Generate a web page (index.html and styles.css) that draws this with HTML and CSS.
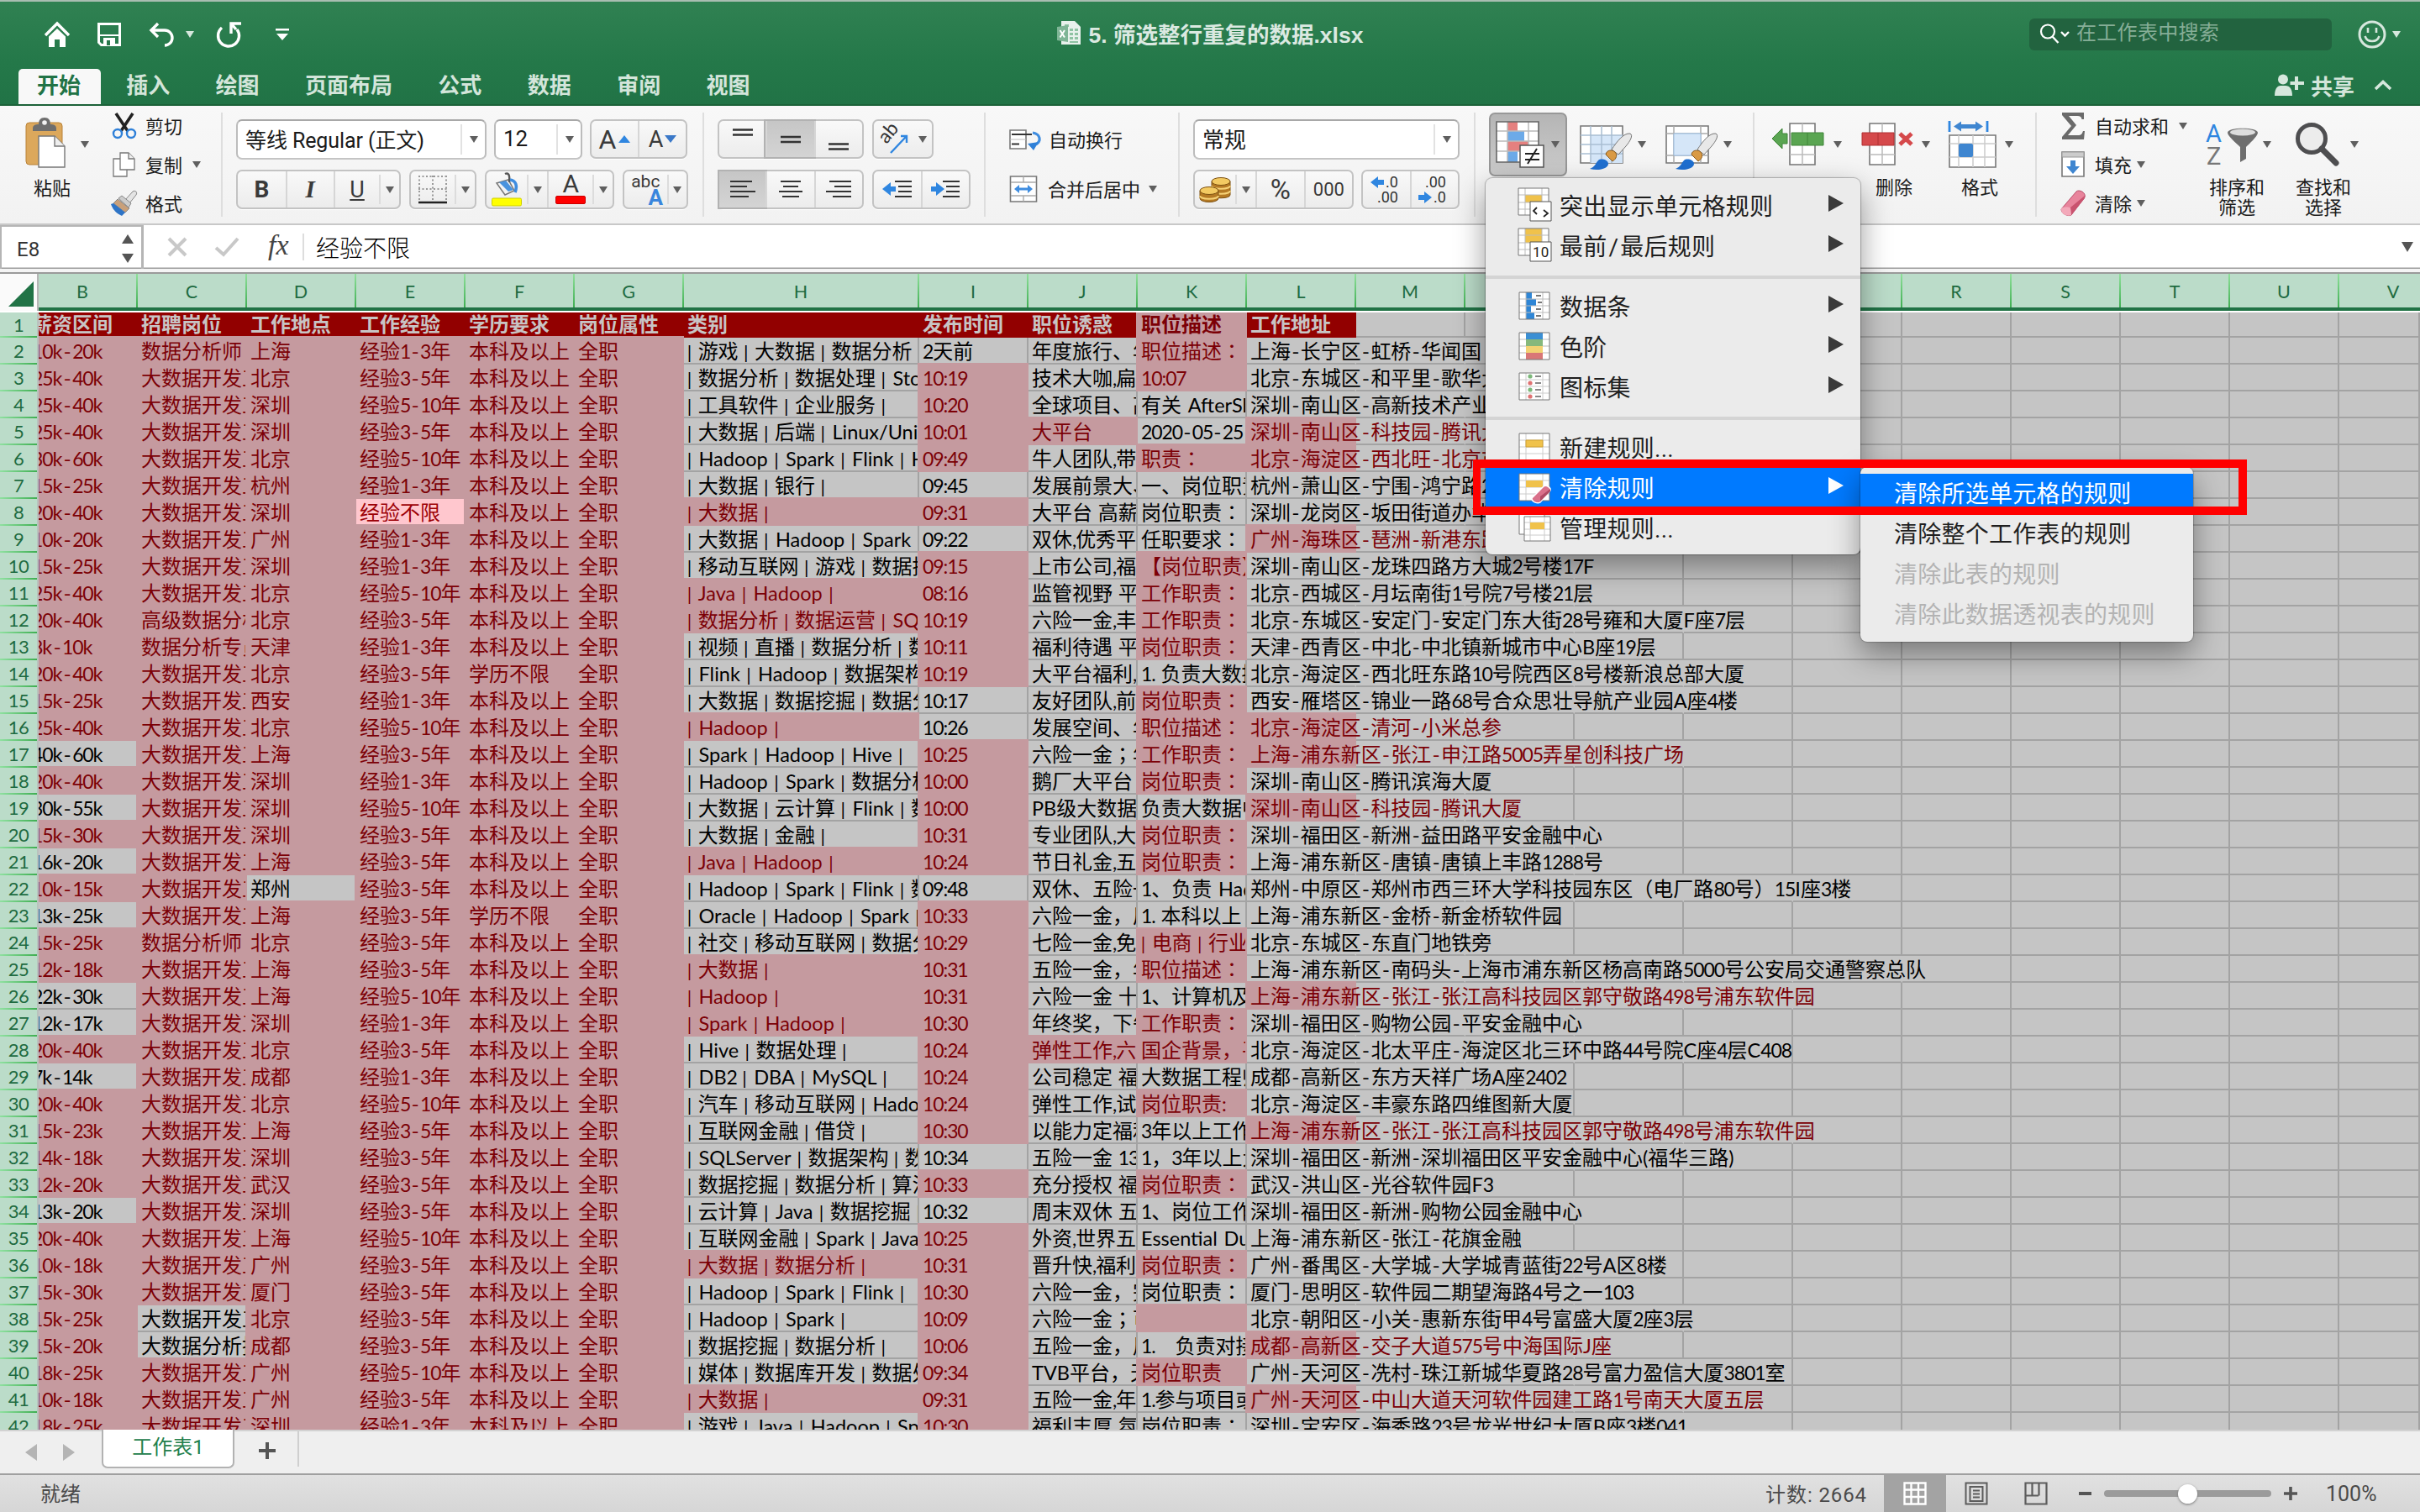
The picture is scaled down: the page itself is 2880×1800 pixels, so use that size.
FILE: index.html
```html
<!DOCTYPE html>
<html lang="zh-CN">
<head>
<meta charset="utf-8">
<title>5. 筛选整行重复的数据.xlsx</title>
<link rel="stylesheet" href="styles.css">
</head>
<body>
<header class="titlebar">
  <div class="title-row">
    <div class="quick">
      <svg class="q-home" width="32" height="32" viewBox="0 0 32 32"><path d="M2 17 16 3l14 14" fill="none" stroke="#fff" stroke-width="3.4"/><path d="M6 18.500 16 9l10 9.500V31h-7v-9h-6v9H6z" fill="#fff"/></svg>
      <svg class="q-save" width="28" height="28" viewBox="0 0 28 28"><path d="M1.500 1.500h25v25h-22l-3-3z" fill="none" stroke="#fff" stroke-width="3"/><path d="M3 14h22v2H3z M7 18h14v9H7z" fill="#fff"/><path d="M11 21h4v6h-4z" fill="#28784b"/></svg>
      <svg class="q-undo" width="32" height="30" viewBox="0 0 32 30"><path d="M11 2 3 10l8 8M4 10h15a9 9 0 0 1 0 18" fill="none" stroke="#fff" stroke-width="3.400"/></svg>
      <i class="caret pale"></i>
      <svg class="q-redo" width="32" height="32" viewBox="0 0 32 32"><path d="M7 8a12.500 12.500 0 1 0 18 2" fill="none" stroke="#fff" stroke-width="3.400"/><path d="M30 3H18v12M18.500 3.500 24 10" fill="none" stroke="#fff" stroke-width="3.400"/></svg>
      <svg class="q-more" width="16" height="14" viewBox="0 0 16 14"><path d="M0 0h16v2.500H0zM1 6h14l-7 8z" fill="#fff"/></svg>
    </div>
    <div class="doc-title">
      <svg width="28" height="28" viewBox="0 0 28 28"><path d="M5 0h16l7 7v21H5z" fill="#e8f1ec"/><path d="M9 4h5v3H9zM15 9h4v3h-4zM21 9h4v3h-4zM15 14h4v3h-4zM21 14h4v3h-4zM15 19h4v3h-4zM21 19h4v3h-4zM15 24h10v2H15z" fill="#8fc3a3"/><path d="M0 7 13 5v20L0 23z" fill="#7fb596"/><path d="M3.500 11 9 19.500M9 11l-5.500 8.500" stroke="#fff" stroke-width="2"/></svg>
      <span>5. 筛选整行重复的数据.xlsx</span>
    </div>
    <div class="title-right">
      <div class="search">
        <svg width="38" height="26" viewBox="0 0 38 26"><circle cx="10" cy="9.500" r="8" fill="none" stroke="#fff" stroke-width="2.200"/><path d="m15.500 15.500 7 7.500M26 10l4.500 4.500L35 10" fill="none" stroke="#fff" stroke-width="2.400"/></svg>
        <span>在工作表中搜索</span>
      </div>
      <svg class="smile" width="34" height="34" viewBox="0 0 34 34"><circle cx="17" cy="17" r="15" fill="none" stroke="#d6e7dd" stroke-width="3"/><path d="M12 9v6M22 9v6M8.500 19a9 9 0 0 0 17 0" fill="none" stroke="#d6e7dd" stroke-width="2.600"/></svg>
      <i class="caret pale"></i>
    </div>
  </div>
  <nav class="tabs">
    <span class="tab on">开始</span><span class="tab">插入</span><span class="tab">绘图</span><span class="tab">页面布局</span><span class="tab">公式</span><span class="tab">数据</span><span class="tab">审阅</span><span class="tab">视图</span>
    <div class="share">
      <svg width="36" height="26" viewBox="0 0 36 26"><circle cx="10" cy="6.500" r="6" fill="#d6e7dd"/><path d="M0 26c0-8 3-12 7-12h6c5 0 8 4 8 12z" fill="#d6e7dd"/><path d="M26 3v16M18.500 11H35" stroke="#d6e7dd" stroke-width="4"/></svg>
      <span>共享</span>
      <svg class="chev" width="22" height="14" viewBox="0 0 22 14"><path d="m2 12 9-8.500 9 8.500" fill="none" stroke="#d6e7dd" stroke-width="3.600"/></svg>
    </div>
  </nav>
</header>

<section class="ribbon">
  <div class="group clip">
    <div class="paste">
      <div class="with-caret">
        <svg width="50" height="62" viewBox="0 0 50 62"><rect x="1" y="7" width="43" height="50" rx="4" fill="#dca85c" stroke="#b98238"/><path d="M9 14c0-4 3-5 7-5 0-5 2-8 7-8s7 3 7 8c4 0 7 1 7 5v3H9z" fill="#6e6e6e"/><circle cx="23" cy="7" r="2.800" fill="#f2f2f2"/><path d="M16 23h19l12 12v25H16z" fill="#fff" stroke="#777" stroke-width="1.400"/><path d="M35 23v12h12" fill="#eee" stroke="#777" stroke-width="1.400"/></svg>
        <i class="caret"></i>
      </div>
      <span class="lab">粘贴</span>
    </div>
    <div class="clip-list">
      <div class="line"><svg width="32" height="32" viewBox="0 0 32 32"><path d="M6 1 20 22M26 1 12 22" stroke="#222" stroke-width="3.600"/><circle cx="8" cy="25" r="5" fill="none" stroke="#2f80d8" stroke-width="2.400"/><circle cx="24" cy="25" r="5" fill="none" stroke="#2f80d8" stroke-width="2.400"/></svg><span>剪切</span></div>
      <div class="line"><svg width="32" height="32" viewBox="0 0 32 32"><path d="M3 9h10l6 6v15H3z" fill="#fff" stroke="#777" stroke-width="1.300"/><path d="M11 2h10l7 7v13H11z" fill="#fff" stroke="#777" stroke-width="1.300"/><path d="M21 2v7h7" fill="#eee" stroke="#777" stroke-width="1.300"/></svg><span>复制</span><i class="caret"></i></div>
      <div class="line"><svg width="32" height="32" viewBox="0 0 32 32"><path d="m17 12 9-10c3-2 6 1 4 4l-8 10z" fill="#e4e4e4" stroke="#888"/><path d="m8 11 14 11-5 5L3 16z" fill="#c9a07a" stroke="#888"/><path d="m3 16 14 11-4 4C6 28 2 23 0 17z" fill="#2e74c6"/><path d="m9 10 4-3 11 9-3 5z" fill="#ccc" stroke="#888"/></svg><span>格式</span></div>
    </div>
  </div>

  <div class="group font">
    <div class="brow">
      <div class="combo w-font"><span>等线 Regular (正文)</span><b></b><i class="caret"></i></div>
      <div class="combo w-size"><span>12</span><b></b><i class="caret"></i></div>
      <div class="btns w-aa"><div class="bt f1 big">A<svg width="14" height="9" viewBox="0 0 14 9"><path d="m0 9 7-9 7 9z" fill="#2f86e0"/></svg></div><div class="bt f1 sep mid">A<svg width="14" height="9" viewBox="0 0 14 9"><path d="M0 0h14L7 9z" fill="#3a78c8"/></svg></div></div>
    </div>
    <div class="brow r2">
      <div class="btns w-biu"><div class="bt w58"><strong>B</strong></div><div class="bt w58 sep"><em>I</em></div><div class="bt w56 sep"><u>U</u></div><div class="bt w24 ssep"><i class="caret"></i></div></div>
      <div class="btns w-bord"><div class="bt w53"><svg width="36" height="36" viewBox="0 0 36 36"><path d="M1 2h34M1 17h34M2 1v30M18 1v30M34 1v30" stroke="#999" stroke-width="2" stroke-dasharray="2 2.500"/><path d="M1 33h34" stroke="#222" stroke-width="2.600"/></svg></div><div class="bt w24 ssep"><i class="caret"></i></div></div>
      <div class="btns w-fill">
        <div class="bt w50"><svg width="40" height="42" viewBox="0 0 40 42"><path d="m8 13 14-4 7 13-11 5z" fill="#f4f4f4" stroke="#777" stroke-width="1.500"/><path d="m11 12 11 11 6-2-9-11z" fill="#4a93de"/><path d="M18 2c4-2 6 1 5 10" fill="none" stroke="#555" stroke-width="2.400"/><path d="M24 9c7 1 9 7 6 15" fill="none" stroke="#3f8de0" stroke-width="3.600"/><rect x="2.500" y="31" width="35" height="9" rx="1.500" fill="#ff0" stroke="#cfcf00"/></svg></div><div class="bt w24 ssep"><i class="caret"></i></div>
        <div class="bt w54 sep stack"><span>A</span><svg width="36" height="10"><rect x=".5" y=".5" width="35" height="9" rx="1.500" fill="#f00" stroke="#c00"/></svg></div><div class="bt w24 ssep"><i class="caret"></i></div>
      </div>
      <div class="btns w-abc"><div class="bt w53 abc"><span>abc</span><b>A</b></div><div class="bt w24 ssep"><i class="caret"></i></div></div>
    </div>
  </div>

  <div class="group align">
    <div class="brow">
      <div class="btns w-al">
        <div class="bt f1"><svg width="28" height="40" viewBox="0 0 28 40"><path d="M2 8.500h24M2 14.500h24" stroke="#333" stroke-width="2.400"/></svg></div>
        <div class="bt f1 sep press"><svg width="28" height="40" viewBox="0 0 28 40"><path d="M2 17h24M2 23h24" stroke="#333" stroke-width="2.400"/></svg></div>
        <div class="bt f1 sep"><svg width="28" height="40" viewBox="0 0 28 40"><path d="M2 25.500h24M2 31.500h24" stroke="#333" stroke-width="2.400"/></svg></div>
      </div>
      <div class="btns w-ab"><div class="bt w48"><svg width="36" height="34" viewBox="0 0 36 34"><text x="0" y="0" transform="translate(9 23) rotate(-50)" font-family="Lato" font-size="23" fill="#333">ab</text><path d="m14 33 18-19M26 13h7v8" fill="none" stroke="#2f86e0" stroke-width="2.400"/></svg></div><div class="bt w20"><i class="caret"></i></div></div>
    </div>
    <div class="brow r2">
      <div class="btns w-al">
        <div class="bt f1 press"><svg width="32" height="24" viewBox="0 0 32 24"><path d="M1 2h26M1 8h20M1 14h30M1 20h22" stroke="#333" stroke-width="2.200"/></svg></div>
        <div class="bt f1 sep"><svg width="32" height="24" viewBox="0 0 32 24"><path d="M4 2h24M7 8h18M2 14h28M6 20h20" stroke="#333" stroke-width="2.200"/></svg></div>
        <div class="bt f1 sep"><svg width="32" height="24" viewBox="0 0 32 24"><path d="M5 2h26M11 8h20M1 14h30M9 20h22" stroke="#333" stroke-width="2.200"/></svg></div>
      </div>
      <div class="btns w-ind">
        <div class="bt f1"><svg width="36" height="24" viewBox="0 0 36 24"><path d="M15 2h20M19 8h16M19 14h16M15 20h20" stroke="#333" stroke-width="2.200"/><path d="m0 11 10-8v5h6v6h-6v5z" fill="#2f86e0"/></svg></div>
        <div class="bt f1 sep"><svg width="36" height="24" viewBox="0 0 36 24"><path d="M15 2h20M19 8h16M19 14h16M15 20h20" stroke="#333" stroke-width="2.200"/><path d="M17 11 7 3v5H1v6h6v5z" fill="#2f86e0"/></svg></div>
      </div>
    </div>
  </div>

  <div class="group wrap">
    <div class="line"><svg width="40" height="28" viewBox="0 0 40 28"><path d="M2 3h19v22H2z" fill="#fff" stroke="#777" stroke-width="1.600"/><path d="M2 14h19" stroke="#bbb"/><path d="M4 8h24M4 19.500h9" stroke="#333" stroke-width="2.200"/><path d="M29 6c10 2 10 10 4 14" fill="none" stroke="#3f8de0" stroke-width="3.200"/><path d="m23 19 13-2-6 10z" fill="#2f80d8"/></svg><span>自动换行</span></div>
    <div class="line l2"><svg width="34" height="34" viewBox="0 0 34 34"><path d="M1.500 2h31v30h-31z" fill="#fff" stroke="#777" stroke-width="1.600"/><path d="M2 9h30M2 25h30M17 2v7M17 25v7" stroke="#aaa" stroke-width="1.400"/><path d="m6 17 6-5v3.500h10V12l6 5-6 5v-3.500H12V22z" fill="#3f8de0"/></svg><span>合并后居中</span><i class="caret"></i></div>
  </div>

  <div class="group num">
    <div class="brow"><div class="combo w-num"><span>常规</span><b></b><i class="caret"></i></div></div>
    <div class="brow r2">
      <div class="btns w-cur">
        <div class="bt w50"><svg width="38" height="32" viewBox="0 0 38 32"><g stroke="#7d5010" stroke-width="1"><path d="M15 6v16c0 5 22 5 22 0V6z" fill="#b57a24"/><path d="M15 11c0 5 22 5 22 0M15 17c0 5 22 5 22 0" fill="none" stroke="#f6d277" stroke-width="2"/><ellipse cx="26" cy="6" rx="11" ry="4.500" fill="#f3ca62"/><path d="M1 17v9c0 6 22 6 22 0v-9z" fill="#b57a24"/><path d="M1 23c0 5 22 5 22 0" fill="none" stroke="#f6d277" stroke-width="2"/><ellipse cx="12" cy="17" rx="11" ry="4.500" fill="#f3ca62"/></g></svg></div>
        <div class="bt w24 ssep"><i class="caret"></i></div><div class="bt w58 sep pct">%</div><div class="bt w58 sep zeros">000</div>
      </div>
      <div class="btns w-dec">
        <div class="bt f1"><svg width="40" height="36" viewBox="0 0 40 36"><path d="m1 9 9-7v4h7v6h-7v4z" fill="#2f86e0"/><text x="19" y="15" class="dt">.0</text><text x="9" y="33" class="dt">.00</text></svg></div>
        <div class="bt f1 sep"><svg width="40" height="36" viewBox="0 0 40 36"><text x="9" y="15" class="dt">.00</text><text x="19" y="33" class="dt">.0</text><path d="m17 27-9-7v4H1v6h7v4z" fill="#2f86e0"/></svg></div>
      </div>
    </div>
  </div>

  <div class="group styles">
    <div class="cf-btn"><svg width="60" height="56" viewBox="0 0 60 56"><path d="M1 1h50v48H1z" fill="#fff"/><path d="M14 1h12v11H14z" fill="#e5807f"/><path d="M14 12h20v12H14z" fill="#6caae8"/><path d="M14 24h25v12H14z" fill="#e5807f"/><path d="M14 36h12v13H14z" fill="#6caae8"/><path d="M1 12h50M1 24h50M1 36h50M14 1v48M39 1v48" stroke="#bbb" stroke-width="1.500"/><path d="M1 1h50v48H1z" fill="none" stroke="#666" stroke-width="1.600"/><path d="M29 29h28v26H29z" fill="#fff" stroke="#555" stroke-width="1.500"/><path d="M35 39h17M35 46h17M49 33 38 51" stroke="#222" stroke-width="2"/></svg><i class="caret"></i></div>
    <svg class="i-table" width="66" height="56" viewBox="0 0 66 56"><path d="M1 2h50v44H1z" fill="#fff" stroke="#777" stroke-width="1.600"/><path d="M13 13h38v33H13z" fill="#d5e6f8"/><path d="M1 13h50M1 24h50M1 35h50M13 2v44M26 2v44M38 2v44" stroke="#a9bed2" stroke-width="1.500"/><path d="M60 11c4 2 0 9-5 15l-9 10-8-6c6-9 14-20 22-19z" fill="#e8e8e8" stroke="#777"/><path d="M31 36c1-6 8-6 11-3s2 8-3 11z" fill="#d99a45" stroke="#8a5a1c"/><path d="M12 53c6-2 7-7 10-10s12-1 12 4-10 9-22 6z" fill="#1f6fd0"/></svg>
    <i class="caret"></i>
    <svg class="i-cell" width="66" height="56" viewBox="0 0 66 56"><path d="M1 2h50v44H1z" fill="#fff" stroke="#777" stroke-width="1.600"/><path d="M1 11h50M1 37h50M10 2v44M42 2v44" stroke="#aaa" stroke-width="1.500"/><path d="M10 11h32v26H10z" fill="#d5e6f8" stroke="#9cbfe4"/><path d="M60 11c4 2 0 9-5 15l-9 10-8-6c6-9 14-20 22-19z" fill="#e8e8e8" stroke="#777"/><path d="M31 36c1-6 8-6 11-3s2 8-3 11z" fill="#d99a45" stroke="#8a5a1c"/><path d="M12 53c6-2 7-7 10-10s12-1 12 4-10 9-22 6z" fill="#1f6fd0"/></svg>
    <i class="caret"></i>
  </div>

  <div class="group cells">
    <div class="tool t-ins"><div class="with-caret"><svg width="64" height="52" viewBox="0 0 64 52"><path d="M22 1h30v49H22z" fill="#fff" stroke="#777" stroke-width="1.600"/><path d="M37 1v49M22 38h30" stroke="#bbb" stroke-width="1.500"/><path d="M24 12h38v15H24z" fill="#5aa552" stroke="#3f8538"/><path d="M43 12v15" stroke="#3f8538"/><path d="m1 19 12-12v6h6v12h-6v6z" fill="#5aa552" stroke="#3f8538"/></svg><i class="caret"></i></div></div>
    <div class="tool t-del"><div class="with-caret"><svg width="64" height="52" viewBox="0 0 64 52"><path d="M10 1h30v49H10z" fill="#fff" stroke="#777" stroke-width="1.600"/><path d="M25 1v49M10 38h30" stroke="#bbb" stroke-width="1.500"/><path d="M1 12h38v15H1z" fill="#d5494b" stroke="#b03032"/><path d="M20 12v15" stroke="#b03032"/><path d="m46 13 14 13M60 13 46 26" stroke="#d5494b" stroke-width="5"/></svg><i class="caret"></i></div><span class="lab">删除</span></div>
    <div class="tool t-fmt"><div class="with-caret"><svg width="60" height="58" viewBox="0 0 60 58"><path d="M2 1v13M47 1v13" stroke="#2f86e0" stroke-width="2.800"/><path d="m7 7.500 9-6V5h17V1.500l9 6-9 6V10H16v3.500z" fill="#3f86d0"/><path d="M2 18h55v38H2z" fill="#fff" stroke="#777" stroke-width="1.600"/><path d="M2 28h55M2 44h55M13 18v38M30 18v38M44 18v38" stroke="#ccc" stroke-width="1.500"/><rect x="13" y="28" width="17" height="16" rx="2" fill="#3f86d0"/></svg><i class="caret"></i></div><span class="lab">格式</span></div>
  </div>

  <div class="group edit">
    <div class="edit-list">
      <div class="line"><svg width="34" height="34" viewBox="0 0 34 34"><path d="M4 1h26v8h-2.500c-.500-3-2-4-5-4H12l9 11-10 12h12c4 0 5-2 6-5h2l-1 10H4v-3l11-13L4 4z" fill="#6a6a6a"/></svg><span>自动求和</span><i class="caret"></i></div>
      <div class="line"><svg width="34" height="32" viewBox="0 0 34 32"><path d="M4 1h26v29H4z" fill="#fff" stroke="#777" stroke-width="1.600"/><path d="M4 1h26v6H4z" fill="#ccc" stroke="#999"/><path d="M14 11h6v7h5l-8 9-8-9h5z" fill="#3f86d0"/></svg><span>填充</span><i class="caret near"></i></div>
      <div class="line"><svg width="34" height="34" viewBox="0 0 34 34"><path d="M3 24 21 3c3-3 12 1 10 7L15 31c-3 2-12-1-12-7z" fill="#e8849c" stroke="#b9506c"/><path d="m15 31-1-9L31 8v3z" fill="#c9536f"/><path d="M3 24c0-3 10-3 11-1l1 8c-3 2-12 0-12-7z" fill="#f3a9ba"/></svg><span>清除</span><i class="caret near"></i></div>
    </div>
    <div class="tool t-sort"><div class="with-caret"><svg width="64" height="52" viewBox="0 0 64 52"><text x="0" y="23" font-family="Roboto" font-size="29" fill="#2f86e0">A</text><text x="1" y="50" font-family="Roboto" font-size="29" fill="#777">Z</text><path d="M26 12c0-7 36-7 36 0 0 4-11 14-14 17v14l-7 4V29c-4-4-15-13-15-17z" fill="#6e6e6e"/><ellipse cx="44" cy="11.500" rx="15" ry="4" fill="#ddd"/></svg><i class="caret"></i></div><span class="lab">排序和<br>筛选</span></div>
    <div class="tool t-find"><div class="with-caret"><svg width="54" height="54" viewBox="0 0 54 54"><circle cx="20" cy="20" r="16.500" fill="#ececec" stroke="#4e4e50" stroke-width="5"/><path d="m32 32 17 17" stroke="#4e4e50" stroke-width="7" stroke-linecap="round"/></svg><i class="caret"></i></div><span class="lab">查找和<br>选择</span></div>
  </div>
</section>

<section class="formula">
  <div class="name-box"><span>E8</span><svg width="16" height="34" viewBox="0 0 16 34"><path d="M1 11 8 0l7 11zM1 23h14L8 34z" fill="#555"/></svg></div>
  <svg class="fx-x" width="24" height="24" viewBox="0 0 24 24"><path d="m2 2 20 20M22 2 2 22" stroke="#c8c8c8" stroke-width="4"/></svg>
  <svg class="fx-v" width="30" height="24" viewBox="0 0 30 24"><path d="m2 13 9 8L28 2" fill="none" stroke="#c8c8c8" stroke-width="4"/></svg>
  <span class="fx">fx</span>
  <span class="fx-text">经验不限</span>
  <i class="caret wide"></i>
</section>

<main class="sheet" id="sheet"></main>

<footer class="sheetbar">
  <svg class="nav-arrows" width="62" height="22" viewBox="0 0 62 22"><path d="M15 1v20L1 11zM46 1v20l14-10z" fill="#b4b4b4"/></svg>
  <span class="sheet-tab">工作表1</span>
  <span class="add"><svg width="20" height="20"><path d="M10 0v20M0 10h20" stroke="#555" stroke-width="4"/></svg></span>
</footer>
<footer class="status">
  <span class="ready">就绪</span>
  <span class="count">计数: 2664</span>
  <span class="view on"><svg width="28" height="28" viewBox="0 0 28 28"><path d="M1.500 1.500h25v25h-25zM1.500 9.500h25M1.500 18h25M9.500 1.500v25M18 1.500v25" fill="none" stroke="#fff" stroke-width="2.400"/></svg></span>
  <span class="view"><svg width="28" height="28" viewBox="0 0 28 28"><path d="M1.500 1.500h25v25h-25zM6.500 6h15v17h-15zM10 10.500h8M10 14.500h8M10 18.500h8" fill="none" stroke="#5c5c5c" stroke-width="2"/></svg></span>
  <span class="view"><svg width="28" height="28" viewBox="0 0 28 28"><path d="M1.500 1.500h25v25h-25zM1.500 16.500h15.500M9.500 2v14M17.500 2v14.500" fill="none" stroke="#5c5c5c" stroke-width="2.200"/></svg></span>
  <span class="minus"></span>
  <span class="slider"><b></b></span>
  <svg class="plus" width="16" height="16"><path d="M8 0v16M0 8h16" stroke="#555" stroke-width="3.600"/></svg>
  <span class="zoom">100%</span>
</footer>

<div class="menu">
  <div class="mi"><svg width="42" height="42" viewBox="0 0 42 42"><path d="M1 1h36v32H1z" fill="#fff"/><path d="M9 9h20v9H9z" fill="#f0c24b"/><path d="M1 9h36M1 18h36M1 26h36M9 1v32M29 1v32" stroke="#bbb"/><path d="M1 1h36v32H1z" fill="none" stroke="#777"/><path d="M15 17h25v23H15z" fill="#fff" stroke="#555"/><path d="m23 24-4 4 4 4M31 27l5 4-5 4" fill="none" stroke="#222" stroke-width="1.800"/></svg><span>突出显示单元格规则</span><i></i></div>
  <div class="mi"><svg width="42" height="42" viewBox="0 0 42 42"><path d="M1 1h36v32H1z" fill="#fff"/><path d="M9 1h20v17H9z" fill="#f0c24b"/><path d="M1 9h36M1 18h36M1 26h36M9 1v32M29 1v32" stroke="#bbb"/><path d="M1 1h36v32H1z" fill="none" stroke="#777"/><path d="M15 17h25v23H15z" fill="#fff" stroke="#555"/><text x="18" y="34.500" font-family="Roboto" font-size="17" fill="#222">10</text></svg><span>最前<b>/</b>最后规则</span><i></i></div>
  <hr>
  <div class="mi"><svg width="42" height="42" viewBox="0 0 42 42"><path d="M2 5h36v32H2z" fill="#fff"/><path d="M10 5h7v8h5v8h-6v8h4v8H10z" fill="#2f86d6"/><path d="M2 13h36M2 21h36M2 29h36M10 5v32M30 5v32" stroke="#bbb"/><path d="M22 9h6M24 17h5M22 25h6M22 33h6" stroke="#777" stroke-width="2"/><path d="M2 5h36v32H2z" fill="none" stroke="#777"/></svg><span>数据条</span><i></i></div>
  <div class="mi"><svg width="42" height="42" viewBox="0 0 42 42"><path d="M2 5h36v32H2z" fill="#fff"/><path d="M2 13h36M2 21h36M2 29h36" stroke="#bbb"/><path d="M10 5h20v8H10z" fill="#3b8fd4"/><path d="M10 13h20v8H10z" fill="#86b87c"/><path d="M10 21h20v8H10z" fill="#f2d273"/><path d="M10 29h20v8H10z" fill="#d97777"/><path d="M2 5h36v32H2z" fill="none" stroke="#777"/></svg><span>色阶</span><i></i></div>
  <div class="mi"><svg width="42" height="42" viewBox="0 0 42 42"><path d="M2 5h36v32H2z" fill="#fff"/><path d="M2 13h36M2 21h36M2 29h36M10 5v32M30 5v32" stroke="#ccc"/><g fill="#7cb87a"><circle cx="15" cy="9" r="2.600"/><circle cx="15" cy="25" r="2.600"/></g><g fill="#df7272"><circle cx="15" cy="17" r="2.600"/><circle cx="15" cy="33" r="2.600"/></g><path d="M21 9h7M21 17h7M21 25h7M21 33h7" stroke="#888" stroke-width="2"/><path d="M2 5h36v32H2z" fill="none" stroke="#777"/></svg><span>图标集</span><i></i></div>
  <hr>
  <div class="mi"><svg width="42" height="42" viewBox="0 0 42 42"><path d="M2 5h36v32H2z" fill="#fff"/><path d="M2 13h36M2 21h36M2 29h36M10 5v32M30 5v32" stroke="#ccc"/><path d="M10 13h20v8H10z" fill="#f0c24b" stroke="#d0a030"/><path d="M2 5h36v32H2z" fill="none" stroke="#777"/></svg><span>新建规则...</span></div>
  <div class="mi on"><svg width="42" height="42" viewBox="0 0 42 42"><path d="M2 5h36v32H2z" fill="#fff"/><path d="M2 13h36M2 21h36M2 29h36M10 5v32M30 5v32" stroke="#ccc"/><path d="M10 13h20v8H10z" fill="#f0c24b"/><path d="M2 5h36v32H2z" fill="none" stroke="#777"/><path d="m17 34 14-14c3-2 9 1 8 5L27 39c-3 2-10 0-10-5z" fill="#d9708a" stroke="#fff" stroke-width="1.500"/><path d="m27 38 0-6 12-9v3z" fill="#b04a64"/></svg><span>清除规则</span><i></i></div>
  <div class="mi"><svg width="42" height="42" viewBox="0 0 42 42"><path d="M2 1h30v28H2z" fill="#fff" stroke="#777"/><path d="M8 8h31v29H8z" fill="#fff"/><path d="M8 15h31M8 23h31M8 30h31M15 8v29M32 8v29" stroke="#ccc"/><path d="M15 15h17v8H15z" fill="#f0c24b"/><path d="M8 8h31v29H8z" fill="none" stroke="#777"/></svg><span>管理规则...</span></div>
</div>
<div class="submenu">
  <div class="si on">清除所选单元格的规则</div>
  <div class="si">清除整个工作表的规则</div>
  <div class="si off">清除此表的规则</div>
  <div class="si off">清除此数据透视表的规则</div>
</div>
<div class="callout"></div>
<script src="sheet.js"></script>
</body>
</html>
```
FILE: styles.css
```css
* { box-sizing: border-box; }
html, body { margin: 0; }
body {
  width: 2880px; height: 1800px; overflow: hidden; position: relative;
  display: flex; flex-direction: column;
  font-family: Roboto, "Noto Sans CJK SC", sans-serif;
  font-size: 22px; color: #1a1a1a; background: #efefef;
}
svg { display: block; flex: none; overflow: visible; }
.caret { flex: none; width: 0; height: 0; border: 5px solid transparent; border-top: 8px solid #5f5f5f; border-bottom: 0; }
.caret.pale { border-top-color: #d6e7dd; }
.caret.wide { border-width: 12px 7px 0; border-top-color: #555; }

/* title bar */
.titlebar { height: 126px; border-top: 2px solid #a9bdb1; border-bottom: 2px solid #1c6239; background: linear-gradient(#308152, #247849 60%, #217346); }
.title-row { height: 77px; display: grid; grid-template-columns: 1fr auto 1fr; align-items: center; }
.quick { display: flex; align-items: center; padding-left: 52px; }
.q-save { margin-left: 32px; }
.q-undo { margin-left: 33px; }
.q-undo + .caret { margin-left: 12px; }
.q-redo { margin-left: 26px; }
.q-more { margin-left: 39px; }
.doc-title { display: flex; align-items: center; gap: 10px; margin-top: -3px; font-family: "Liberation Sans", "Noto Sans CJK SC", sans-serif; font-size: 26.500px; font-weight: 700; color: #dbe9e1; }
.title-right { display: flex; align-items: center; justify-content: flex-end; padding-right: 23px; }
.title-right .caret { margin-left: 7px; }
.search { width: 360px; height: 38px; margin-right: 31px; padding-left: 12px; border-radius: 6px; background: #22633f; display: flex; align-items: center; gap: 6px; font-size: 24px; line-height: 34px; color: #86ae97; }
.search span { margin-top: -3px; letter-spacing: .300px; }
.tabs { height: 45px; padding: 3px 33px 0 22px; display: flex; align-items: stretch; font-size: 26px; color: #d3e5da; }
.tab { padding: 0 27.200px; line-height: 41px; font-weight: 700; }
.tab.on { width: 98px; margin-right: 3px; padding: 0 22px; background: #f8f8f8; color: #217346; border-radius: 5px 5px 0 0; }
.share { margin-left: auto; display: flex; align-items: center; gap: 7px; font-weight: 700; padding-bottom: 4px; }
.chev { margin-left: 16px; }

/* ribbon */
.ribbon { height: 142px; padding-top: 8px; display: flex; background: linear-gradient(#f8f8f8, #f2f2f2); border-bottom: 2px solid #c8c8c8; }
.group { height: 124px; border-right: 2px solid #dedede; flex: none; }
.lab { font-size: 22px; line-height: 24px; text-align: center; }
.line { display: flex; align-items: center; height: 32px; }
.line span { margin-top: -3px; }
.with-caret { display: flex; align-items: center; }
.clip { width: 265px; display: flex; }
.paste { width: 106px; padding-left: 30px; padding-top: 5px; }
.paste .caret { margin: 4px 0 0 16px; }
.paste .lab { display: block; width: 64px; margin-top: 12px; }
.clip-list, .edit-list { display: flex; flex-direction: column; gap: 14px; }
.clip-list { padding-left: 26px; }
.clip-list span { margin-left: 9px; }
.clip-list .caret { margin-left: 12px; }
.brow { display: flex; gap: 9px; padding-top: 8px; height: 68px; }
.brow.r2 { padding-top: 0; height: 48px; }
.combo { height: 48px; display: flex; align-items: center; padding: 0 8px 0 9px; background: #fff; border: 2px solid #b5b5b5; border-color: #a8a8a8 #bcbcbc #c4c4c4; border-radius: 7px; font-size: 26px; }
.combo span { margin-top: -3px; }
.w-font span { font-size: 25px; letter-spacing: -.100px; }
.combo b { margin-left: auto; height: 36px; border-left: 2px solid #e2e2e2; margin-right: 9px; }
.btns { height: 47px; display: flex; border: 2px solid #c3c3c3; border-radius: 7px; background: linear-gradient(#f9f9f9, #ececec); box-shadow: 0 1px 1px #fff; }
.bt { display: flex; align-items: center; justify-content: center; position: relative; color: #3a3a3a; }
.bt.sep { border-left: 2px solid #d6d6d6; }
.bt.ssep { border-left: 2px solid #dcdcdc; margin: 4px 0; }
.bt.press { background: linear-gradient(#c6c6c6, #d4d4d4); box-shadow: 0 0 0 2px #b2b2b2; }
.f1 { flex: 1; } .w20 { width: 20px; } .w24 { width: 24px; } .w48 { width: 48px; } .w50 { width: 49px; } .w53 { width: 52px; } .w54 { width: 55px; } .w56 { width: 56px; } .w58 { width: 58px; }
.font { width: 573px; padding-left: 16px; }
.align { width: 335px; padding-left: 16px; }
.align .brow { gap: 10px; }
.w-font { width: 298px; } .w-size { width: 105px; } .w-aa { width: 116px; } .w-biu { width: 196px; } .w-bord { width: 80px; } .w-fill { width: 154px; } .w-abc { width: 78px; }
.font .r2 { gap: 10px; }
.big { font-size: 32px; gap: 3px; } .mid { font-size: 27px; gap: 2px; }
.bt strong { font-size: 28px; } .bt em { font: italic 700 29px "Liberation Serif"; } .bt u { font-size: 27px; }
.stack { flex-direction: column; font-size: 30px; line-height: 27px; justify-content: flex-end; padding-bottom: 4px; gap: 1px; }
.abc { flex-direction: column; line-height: 19px; font-size: 21px; }
.abc b { font-size: 26px; color: #3a86dd; margin-left: 24px; font-weight: 700; }
.w-al { width: 174px; } .w-ab { width: 73px; } .w-ind { width: 117px; }
.wrap { width: 231px; padding-left: 27px; padding-top: 16px; }
.wrap .l2 { margin-top: 27px; }
.wrap span { margin-left: 8px; } .wrap .l2 svg { margin-left: 1px; } .wrap .l2 span { margin-left: 12px; } .wrap .caret { margin-left: 10px; }
.num { width: 352px; padding-left: 16px; }
.w-num { width: 317px; } .w-cur { width: 191px; } .w-dec { width: 117px; }
.pct { font-size: 33px; } .zeros { font-size: 22px; }
.dt { font-family: Roboto; font-size: 18px; fill: #333; }
.styles { width: 332px; padding-left: 16px; display: flex; align-items: flex-start; }
.cf-btn { width: 93px; height: 76px; display: flex; align-items: center; gap: 6px; padding-left: 6px; border: 2px solid #989898; border-radius: 7px; background: linear-gradient(#b5b5b5, #cbcbcb); }
.i-table { margin: 14px 3px 0 15px; } .i-cell { margin: 14px 3px 0 23px; }
.styles > .caret { margin-top: 34px; }
.cells { width: 336px; display: flex; }
.tool { display: flex; flex-direction: column; }
.tool .caret { margin-left: 10px; }
.tool .lab { width: 80px; }
.t-ins { margin-left: 20px; width: 106px; padding-top: 12px; }
.t-del .lab { margin-top: 14px; }
.t-del { width: 104px; padding-top: 12px; } .t-del .with-caret { margin-left: 1px; } .t-del .caret { margin-left: 8px; }
.t-fmt { padding-top: 9px; width: 90px; } .t-fmt .lab { margin-top: 11px; width: 76px; } .t-fmt .caret { margin-left: 8px; }
.edit { flex: 1; border-right: 0; display: flex; padding-left: 26px; }
.edit-list { width: 175px; }
.edit-list span { margin-left: 9px; } .edit-list .caret { margin-left: 12px; } .edit-list .near { margin-left: 6px; }
.t-sort { width: 106px; padding-top: 12px; } .t-sort .lab { margin-top: 14px; width: 74px; } .t-sort .caret { margin-left: 4px; }
.t-find { padding-top: 11px; } .t-find .lab { margin-top: 13px; width: 68px; } .t-find .caret { margin-left: 12px; }

/* formula bar */
.formula { height: 58px; display: flex; align-items: center; background: #fff; border-bottom: 2px solid #9a9a9a; box-shadow: inset 0 -4px 0 #f4f4f4, inset 0 -5.500px 0 #9d9d9d; padding-bottom: 4px; }
.name-box { width: 171px; height: 52px; display: flex; align-items: center; justify-content: space-between; padding: 2px 8px 0 18px; border-right: 3px solid #b5b5b5; border-left: 2px solid #b5b5b5; border-top: 2px solid #b5b5b5; font-size: 24px; color: #333; }
.name-box span { padding-top: 2px; }
.fx-x { margin-left: 28px; } .fx-v { margin-left: 32px; }
.fx { margin-left: 34px; width: 43px; height: 32px; font: italic 34px/28px "Liberation Serif"; color: #444; border-right: 2px solid #ddd; }
.fx-text { margin-left: 14px; font-size: 28px; font-weight: 300; color: #000; }
.formula .wide { margin: 0 8px 0 auto; }

/* sheet */
.sheet { height: 1376px; overflow: hidden; isolation: isolate; background: #c5c5c5; font-family: "Noto Sans CJK SC", sans-serif; font-size: 24px; }
.sheet .row, .sheet .heads { display: grid; grid-template-columns: 46px 118px repeat(5, 130px) 280px repeat(13, 130px) 96px; }
.heads { height: 46px; border-bottom: 2px solid #fff; }
.heads div { height: 44px; padding-right: 2px; background: linear-gradient(#8fe09a, #3fae52) right / 2px 100% no-repeat #bbdcc9; font: 21.500px/43px Lato; text-align: center; color: #1e6b41; border-bottom: 4px solid #217346; overflow: hidden; }
.heads div:nth-child(2) { padding-right: 14px; }
.heads div:last-child { padding: 0 0 0 32px; background: #bbdcc9; }
.heads .corner { background: #fafafa; border-bottom: 0; border-right: 2px solid #b5b5b5; display: flex; align-items: flex-end; padding: 0 0 5px 10px; }
.row { height: 32px; }
.row.r1 { height: 30px; }
.num-h { background: linear-gradient(90deg, #8fe0a0, #3fae52) bottom / 100% 2px no-repeat #bbdcc9; border-right: 2px solid #b9c2bd; font: 22px/32px Lato; text-align: center; color: #1e6b41; letter-spacing: -.600px; }
.r1 .num-h { line-height: 29px; }
.c { min-width: 0; white-space: pre; overflow: hidden; padding-left: 4px; line-height: 29px; color: #000; background: #c5c5c5; border-right: 2px solid #a3a3a3; border-bottom: 2px solid #a3a3a3; }
.c.first { padding-left: 0; text-indent: -8px; }
.c.first span { text-indent: 0; }
.c.dup { background: #c59a9f; border-color: #c59a9f; color: #7c0006; box-shadow: -2px 0 #c59a9f, 0 -2px #c59a9f, -2px -2px #c59a9f; }
.c.first.dup { box-shadow: 0 -2px #c59a9f; }
.c.spill { overflow: visible; }
.c.spill > .txt { position: relative; z-index: 1; }
.c.open { border-right-color: #c5c5c5; }
.c.dup.open { border-right-color: #c59a9f; }
.r1 .c { line-height: 26px; font-weight: 700; }
.r1 .c.title { background: #920000; border-color: #920000; color: #c8c4c4; }
.r1 .c.dup { border-color: #c59a9f; box-shadow: -2px 0 #c59a9f; }
.c.active { background: #ffc7ce; background-clip: padding-box; color: #9c0006; }
.la { font: 23.500px/0 Lato; word-spacing: 1.700px; }
.sp { font: 23.500px/0 Lato; word-spacing: .800px; }
.di { font: 23px/0 Lato; letter-spacing: -1.100px; }
.hy { display: inline-block; width: 11.700px; text-align: center; line-height: 0; }
.pi { display: inline-block; width: 5.800px; text-align: center; font: 22px/0 Lato; text-indent: -1px; }
.tc { font-family: "Noto Sans CJK TC"; line-height: 0; }

/* sheet tabs and status bar */
.sheetbar { height: 54px; display: flex; align-items: flex-start; background: #efefef; border-top: 2px solid #d2d2d2; border-bottom: 2px solid #a0a0a0; }
.nav-arrows { margin: 14px 0 0 29px; }
.sheet-tab { width: 158px; height: 46px; margin: -2px 0 0 30px; text-align: center; line-height: 42px; font-size: 24px; color: #23804c; background: #fff; border: 2px solid #b2b2b2; border-top: 0; border-radius: 0 0 7px 7px; }
.add { width: 77px; height: 42px; padding: 13px 0 0 29px; border-right: 2px solid #cfcfcf; }
.status { height: 44px; display: flex; align-items: center; background: linear-gradient(#e1e1e1, #d6d6d6); font-size: 24px; color: #4a4a4a; }
.ready { margin: -3px 0 0 48px; }
.count { margin: -2px 20px 0 auto; letter-spacing: .900px; }
.view { width: 71px; height: 44px; display: flex; align-items: center; justify-content: center; }
.view.on { width: 74px; background: #a3a3a3; }
.minus { width: 15px; height: 4px; margin-left: 16px; background: #555; }
.slider { width: 199px; height: 8px; margin: 0 15px; border-radius: 4px; background: #9b9b9b; display: flex; align-items: center; justify-content: center; }
.slider b { width: 23px; height: 23px; border-radius: 50%; background: #fff; box-shadow: 0 1px 3px #777; }
.zoom { width: 62px; margin: 0 50px 0 34px; font-size: 25px; }

/* popup menus */
.menu, .submenu { position: absolute; z-index: 2; background: #ebebeb; border-radius: 8px; font-size: 28px; letter-spacing: .250px; color: #1f1f1f; }
.menu { left: 1768px; top: 212px; width: 446px; height: 448px; padding-top: 8px; box-shadow: 0 0 1px 1px rgba(0,0,0,.25), 0 14px 36px rgba(0,0,0,.4); }
.mi { height: 48px; display: flex; align-items: center; padding-left: 38px; }
.mi span { margin: -1px 0 0 8px; }
.mi b { font-weight: 400; padding: 0 2px; }
.mi i { margin: -4px 20px 0 auto; border: 10px solid transparent; border-left: 18px solid #3a3a3a; border-right: 0; }
.mi.on { background: #007aff; color: #fff; }
.mi.on i { border-left-color: #fff; }
.menu hr { height: 4px; margin: 12px 0 8px; border: 0; background: #d4d4d4; }
.submenu { left: 2214px; top: 556px; width: 396px; height: 208px; padding-top: 8px; box-shadow: 0 0 1px 1px rgba(0,0,0,.2), 0 14px 36px rgba(0,0,0,.4); }
.si { height: 48px; line-height: 50px; padding-left: 40px; }
.si.on { background: #007aff; color: #fff; }
.si.off { color: #b3b3b3; }
.callout { position: absolute; z-index: 3; left: 1753px; top: 547px; width: 921px; height: 66px; border: 10px solid #f00; border-left-width: 9px; }
```
FILE: sheet.js
```js
const sheet = document.getElementById('sheet');

// A leading "!" marks a cell with a unique value, "*" one with a duplicate value.
const pay = '10k-20k 25k-40k 25k-40k 25k-40k 30k-60k 15k-25k 20k-40k 10k-20k 15k-25k 25k-40k 20k-40k 8k-10k 20k-40k 15k-25k 25k-40k !40k-60k 20k-40k !30k-55k 15k-30k !16k-20k 10k-15k !13k-25k 15k-25k 12k-18k !22k-30k !12k-17k 20k-40k !7k-14k 20k-40k 15k-23k 14k-18k 12k-20k !13k-20k 20k-40k 10k-18k 15k-30k 15k-25k 15k-20k 18k-25k 10k-18k 18k-25k'.split(' ');
const city = '上海 北京 深圳 深圳 北京 杭州 深圳 广州 深圳 北京 北京 天津 北京 西安 北京 上海 深圳 深圳 深圳 上海 !郑州 上海 北京 上海 上海 深圳 北京 成都 北京 上海 深圳 武汉 深圳 上海 广州 厦门 北京 成都 广州 广州 深圳'.split(' ');
const years = '1-3 3-5 5-10 3-5 5-10 1-3 不限 1-3 1-3 5-10 3-5 1-3 3-5 1-3 5-10 3-5 1-3 5-10 3-5 3-5 3-5 3-5 3-5 3-5 5-10 1-3 3-5 1-3 5-10 3-5 3-5 3-5 3-5 5-10 3-5 3-5 3-5 3-5 5-10 3-5 1-3'.split(' ');
const jobs = { 2: '数据分析师', 12: '高级数据分析师', 13: '数据分析专员', 24: '数据分析师', 38: '!大数据开发工程师', 39: '!大数据分析挖掘' };
const degree = { 14: '学历不限', 23: '学历不限' };
const rest = `| 游戏 | 大数据 | 数据分析 |~2天前~年度旅行、年终奖~*职位描述：~上海-长宁区-虹桥-华闻国
| 数据分析 | 数据处理 | Storm |~*10:19~技术大咖,扁平化~*10:07~北京-东城区-和平里-歌华大
| 工具软件 | 企业服务 |~*10:20~全球项目、高薪~有关 AfterShip~深圳-南山区-高新技术产业
| 大数据 | 后端 | Linux/Unix |~*10:01~*大平台~2020-05-25~*深圳-南山区-科技园-腾讯大
| Hadoop | Spark | Flink | Hive |~*09:49~牛人团队,带薪~*职责：~*北京-海淀区-西北旺-北京市
| 大数据 | 银行 |~09:45~发展前景大、~一、岗位职责~杭州-萧山区-宁围-鸿宁路2
*| 大数据 |~*09:31~大平台 高薪~岗位职责：~深圳-龙岗区-坂田街道办华
| 大数据 | Hadoop | Spark |~09:22~双休,优秀平台~任职要求：~*广州-海珠区-琶洲-新港东路
| 移动互联网 | 游戏 | 数据挖掘 |~*09:15~上市公司,福利~*【岗位职责】~深圳-南山区-龙珠四路方大城2号楼17F
*| Java | Hadoop |~*08:16~监管视野 平台~*工作职责：~北京-西城区-月坛南街1号院7号楼21层
*| 数据分析 | 数据运营 | SQLServer |~*10:19~六险一金,丰厚~*工作职责：~北京-东城区-安定门-安定门东大街28号雍和大厦F座7层
| 视频 | 直播 | 数据分析 | 数据 |~*10:11~福利待遇 平台~*岗位职责：~天津-西青区-中北-中北镇新城市中心B座19层
| Flink | Hadoop | 数据架构 |~*10:19~大平台福利,五~1. 负责大数据~北京-海淀区-西北旺东路10号院西区8号楼新浪总部大厦
| 大数据 | 数据挖掘 | 数据分析 |~10:17~友好团队,前景~*岗位职责：~西安-雁塔区-锦业一路68号合众思壮导航产业园A座4楼
*| Hadoop |~10:26~发展空间、年~*职位描述：~*北京-海淀区-清河-小米总参
| Spark | Hadoop | Hive |~*10:25~六险一金；年~*工作职责：~*上海-浦东新区-张江-申江路5005弄星创科技广场
| Hadoop | Spark | 数据分析 |~*10:00~鹅厂大平台~*岗位职责：~深圳-南山区-腾讯滨海大厦
| 大数据 | 云计算 | Flink | 数据 |~*10:00~PB级大数据~负责大数据中~*深圳-南山区-科技园-腾讯大厦
| 大数据 | 金融 |~*10:31~专业团队,大牛~*岗位职责：~深圳-福田区-新洲-益田路平安金融中心
*| Java | Hadoop |~*10:24~节日礼金,五险~*岗位职责：~上海-浦东新区-唐镇-唐镇上丰路1288号
| Hadoop | Spark | Flink | 数据 |~09:48~双休、五险一~1、负责 Hadoop~郑州-中原区-郑州市西三环大学科技园东区（电厂路80号）15I座3楼
| Oracle | Hadoop | Spark |~*10:33~六险一金，厂~1. 本科以上~上海-浦东新区-金桥-新金桥软件园
| 社交 | 移动互联网 | 数据分析 |~*10:29~七险一金,免费~*| 电商 | 行业~北京-东城区-东直门地铁旁
*| 大数据 |~*10:31~五险一金，年~*职位描述：~上海-浦东新区-南码头-上海市浦东新区杨高南路5000号公安局交通警察总队
*| Hadoop |~*10:31~六险一金 十三~1、计算机及~*上海-浦东新区-张江-张江高科技园区郭守敬路498号浦东软件园
*| Spark | Hadoop |~*10:30~年终奖，下午~*工作职责：~深圳-福田区-购物公园-平安金融中心
| Hive | 数据处理 |~*10:24~*弹性工作,六险~*国企背景，平~北京-海淀区-北太平庄-海淀区北三环中路44号院C座4层C408
| DB2 | DBA | MySQL |~*10:24~公司稳定 福利~大数据工程师~成都-高新区-东方天祥广场A座2402
| 汽车 | 移动互联网 | Hadoop |~*10:24~弹性工作,试用~*岗位职责:~北京-海淀区-丰豪东路四维图新大厦
| 互联网金融 | 借贷 |~*10:30~以能力定福利~3年以上工作~*上海-浦东新区-张江-张江高科技园区郭守敬路498号浦东软件园
| SQLServer | 数据架构 | 数据 |~10:34~五险一金 13薪~1，3年以上大~深圳-福田区-新洲-深圳福田区平安金融中心(福华三路)
| 数据挖掘 | 数据分析 | 算法 |~*10:33~充分授权 福利~*岗位职责：~武汉-洪山区-光谷软件园F3
| 云计算 | Java | 数据挖掘 |~10:32~周末双休 五险~1、岗位工作~深圳-福田区-新洲-购物公园金融中心
| 互联网金融 | Spark | Java |~*10:25~外资,世界五百~Essential Duties~上海-浦东新区-张江-花旗金融
*| 大数据 | 数据分析 |~*10:31~晋升快,福利好~*岗位职责：~广州-番禺区-大学城-大学城青蓝街22号A区8楼
| Hadoop | Spark | Flink |~*10:30~六险一金，完~岗位职责：~厦门-思明区-软件园二期望海路4号之一103
| Hadoop | Spark |~*10:09~六险一金；可~*~北京-朝阳区-小关-惠新东街甲4号富盛大厦2座3层
| 数据挖掘 | 数据分析 |~*10:06~五险一金，周~1.　负责对接~*成都-高新区-交子大道575号中海国际J座
| 媒体 | 数据库开发 | 数据处理 |~*09:34~TVB平台，天~*岗位职责~广州-天河区-冼村-珠江新城华夏路28号富力盈信大厦3801室
*| 大数据 |~*09:31~五险一金,年~1.参与项目或~*广州-天河区-中山大道天河软件园建工路1号南天大厦五层
| 游戏 | Java | Hadoop | Spark |~*10:30~福利丰厚 氛围~岗位职责：~深圳-宝安区-海秀路23号龙光世纪大厦B座3楼041`.split('\n').map(r => r.split('~'));

const typeset = s => s.replace(/(\|)|(-)|([0-9:.,]+)|([A-Za-z/() ]+)|([：；])/g, (m, bar, dash, digits, latin) => {
  if (!bar && !dash && !digits && !latin) return `<span class="tc" lang="zh-TW">${m}</span>`;
  const cls = bar ? 'pi' : dash ? 'hy' : digits ? 'di' : m === ' ' ? 'sp' : 'la';
  return `<span class="${cls}">${m}</span>`;
});

const cell = (value, cls) => `<div class="c ${cls}"><span class="txt">${typeset(value)}</span></div>`;
const empties = Array.from({ length: 10 }, () => '<div class="c"></div>').join('');

let html = '<div class="heads"><div class="corner"><svg width="30" height="30"><path d="M30 0v30H0z" fill="#217346"/></svg></div>'
  + [...'BCDEFGHIJKLMNOPQRSTUV'].map(l => `<div>${l}</div>`).join('') + '</div>';

const titles = '薪资区间 招聘岗位 工作地点 工作经验 学历要求 岗位属性 类别 发布时间 职位诱惑 职位描述 工作地址'.split(' ');
html += '<div class="row r1"><div class="num-h">1</div>'
  + titles.map((t, i) => cell(t, i === 9 ? 'dup' : i ? 'title' : 'title first')).join('') + empties + '</div>';

rest.forEach((tail, i) => {
  const n = i + 2;
  const left = [pay[i], jobs[n] || '大数据开发工程师', city[i], '经验' + years[i] + (n === 8 ? '' : '年'), degree[n] || '本科及以上', '全职'];
  html += `<div class="row"><div class="num-h">${n}</div>`;
  left.forEach((v, k) => {
    const unique = v[0] === '!';
    html += cell(unique ? v.slice(1) : v, (unique ? '' : 'dup') + (k ? '' : ' first') + (n === 8 && k === 3 ? ' active' : ''));
  });
  tail.forEach((v, k) => {
    const dup = v[0] === '*';
    html += cell(dup ? v.slice(1) : v, (dup ? 'dup' : '') + (k === 4 ? ' spill' : ''));
  });
  html += empties + '</div>';
});
sheet.innerHTML = html;

// Long addresses run over the empty cells to their right and hide those borders.
document.querySelectorAll('.spill').forEach(c => {
  let over = c.firstChild.getBoundingClientRect().width + 4 - 130;
  for (let el = c; el && over > 0; el = el.nextElementSibling, over -= 130) el.classList.add('open');
});
```
